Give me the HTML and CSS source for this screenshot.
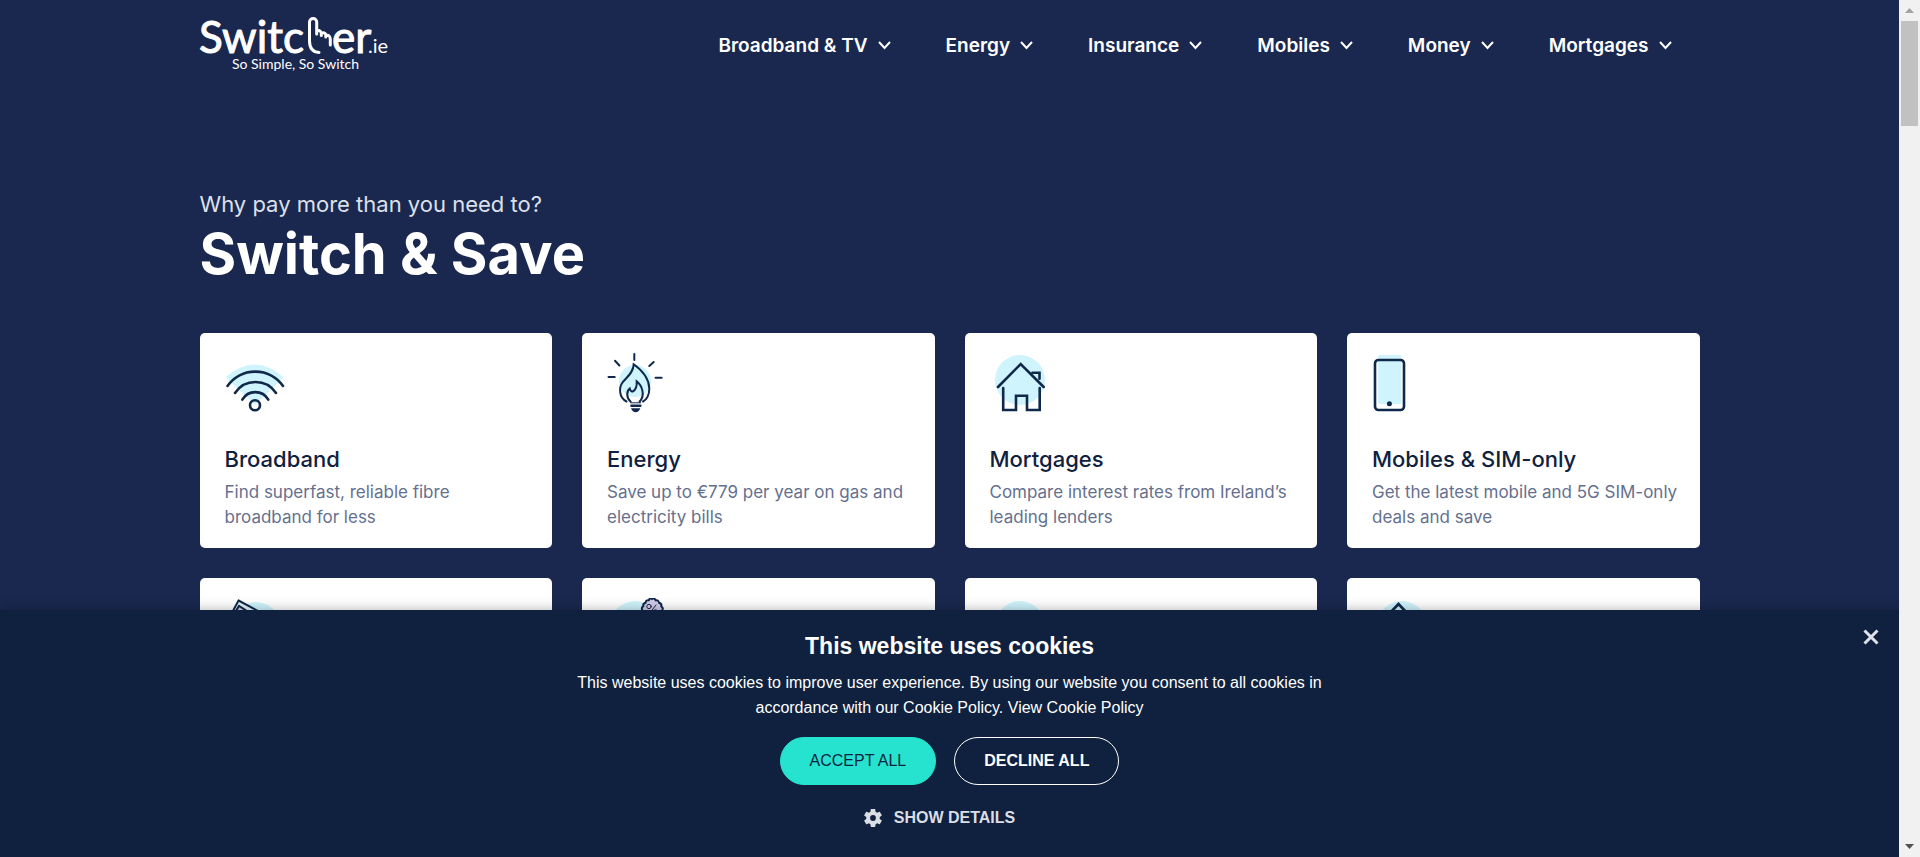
FILE: index.html
```html
<!DOCTYPE html>
<html lang="en">
<head>
<meta charset="utf-8">
<title>Switcher.ie</title>
<link rel="stylesheet" href="styles.css">
</head>
<body>
<div class="window">
  <div class="page">
    <header class="container header">
      <a class="logo" href="#" aria-label="Switcher.ie">
        <svg width="190" height="62" viewBox="0 0 190 62" fill="#fff">
          <g class="logo-word">
            <text x="-1" y="39">Switc</text>
            <text x="132" y="39">er</text>
            <text class="logo-tld" x="168" y="39">.ie</text>
          </g>
          <path d="M119 38.500C112 38 109.500 33 109.500 27V8a3.600 3.600 0 0 1 7.200 0V20V17.500q3.300-2.500 4.600 1.500v2.500v-2q3.500-2 4.500 1.500v2v-1.500q4.500-1 4.500 4V31" fill="none" stroke="#fff" stroke-width="3" stroke-linecap="round" stroke-linejoin="round"/>
          <text class="logo-tag" x="32" y="55">So Simple, So Switch</text>
        </svg>
      </a>
      <nav class="nav">
        <a href="#">Broadband &amp; TV <svg class="chev" width="13" height="9" viewBox="0 0 13 9"><path d="M1 1l5.500 6L12 1"/></svg></a>
        <a href="#">Energy <svg class="chev" width="13" height="9" viewBox="0 0 13 9"><path d="M1 1l5.500 6L12 1"/></svg></a>
        <a href="#">Insurance <svg class="chev" width="13" height="9" viewBox="0 0 13 9"><path d="M1 1l5.500 6L12 1"/></svg></a>
        <a href="#">Mobiles <svg class="chev" width="13" height="9" viewBox="0 0 13 9"><path d="M1 1l5.500 6L12 1"/></svg></a>
        <a href="#">Money <svg class="chev" width="13" height="9" viewBox="0 0 13 9"><path d="M1 1l5.500 6L12 1"/></svg></a>
        <a href="#">Mortgages <svg class="chev" width="13" height="9" viewBox="0 0 13 9"><path d="M1 1l5.500 6L12 1"/></svg></a>
      </nav>
    </header>

    <main class="container">
      <p class="kicker">Why pay more than you need to?</p>
      <h1 class="title">Switch &amp; Save</h1>

      <div class="cards">
        <a class="card" href="#">
          <svg class="icon" viewBox="0 0 60 60">
            <path class="tint" d="M.7 24.300Q30-1.500 58.500 24.300L30 52Z"/>
            <path d="M2.500 33A34 34 0 0 1 58 33M10 40a24.600 24.600 0 0 1 41 0M17.300 46.700a14.900 14.900 0 0 1 26 0"/>
            <circle cx="30" cy="52.300" r="5"/>
          </svg>
          <h2>Broadband</h2>
          <p>Find superfast, reliable fibre broadband for less</p>
        </a>
        <a class="card" href="#">
          <svg class="icon" viewBox="0 0 60 60">
            <circle class="tint" cx="28" cy="28" r="16"/>
            <path class="mid" d="M27.300 1V7M8 7.700l4.400 4.800M46.700 9l-4.400 4M1.500 24h6.200M48.500 24.700h6.200"/>
            <path class="mid" d="M19.500 48.500C11.500 44.500 12 34 15.500 29.500C20 24 26.500 19.500 26.700 11.300C34 16.500 42 24.500 42.300 35.500C42.400 42 39.500 47 36 48.500"/>
            <path class="mid" d="M23.700 48.700C19 44.500 19.500 38 22.700 35.500q1 3.500 3 3C29 37 30 33 29.700 28.300C34.500 32 39 42 32.500 48.700"/>
            <path class="thin" d="M23.700 49.800h10"/>
            <path d="M24.500 52.800h8.800"/>
            <path class="solid" d="M24 55.300h9.300q-1.500 4-4.600 4t-4.700-4Z"/>
          </svg>
          <h2>Energy</h2>
          <p>Save up to €779 per year on gas and electricity bills</p>
        </a>
        <a class="card" href="#">
          <svg class="icon" viewBox="0 0 60 60">
            <circle class="tint" cx="30" cy="27" r="25"/>
            <path d="M8 34L30.700 11L53.700 34M42.500 19.700h7v6M13.200 35V57H26V42.700H37V57H49.700V35"/>
          </svg>
          <h2>Mortgages</h2>
          <p>Compare interest rates from Ireland’s leading lenders</p>
        </a>
        <a class="card" href="#">
          <svg class="icon" viewBox="0 0 60 60">
            <rect class="tint" x="6" y="2" width="23.500" height="49" rx="2"/>
            <rect x="3" y="7" width="29" height="50" rx="3.500"/>
            <circle class="solid" cx="17.400" cy="50.700" r="2.500"/>
          </svg>
          <h2>Mobiles &amp; SIM-only</h2>
          <p>Get the latest mobile and 5G SIM-only deals and save</p>
        </a>
        <a class="card" href="#" aria-label="Ticket offers">
          <svg class="icon" viewBox="0 0 60 60">
            <circle class="tint" cx="31" cy="29" r="25"/>
            <path class="mid paper" d="M13.500 2.500L44 19L30 48L2 24Z"/>
            <path class="mid lilac" d="M9 16l5-8 8 5"/>
          </svg>
        </a>
        <a class="card" href="#" aria-label="Discounts">
          <svg class="icon" viewBox="0 0 60 60">
            <circle class="tint" cx="28" cy="28" r="25"/>
            <path class="mid lilac" d="M45 1q2.500-1.500 3.700 1.300q3-.5 3.300 2.500q3 .8 2.300 3.500q2.500 1.700.9 4q1.400 2.700-1.100 4q.2 3-2.700 3.300q-1 2.800-3.800 2q-2.600 2-4.600-.1q-3 .8-3.900-2q-3-.4-2.700-3.300q-2.400-1.500-1-4q-1.500-2.400.9-4q-.6-2.800 2.300-3.500q.5-3 3.300-2.500q.8-2.700 3.100-1.200Z"/>
            <path class="thin" d="M49 7l-7 9"/>
            <circle class="thin" cx="42" cy="8.500" r="2.200"/>
            <circle class="thin" cx="48.500" cy="14" r="2.200"/>
          </svg>
        </a>
        <a class="card" href="#" aria-label="Money">
          <svg class="icon" viewBox="0 0 60 60">
            <circle class="tint" cx="30" cy="28" r="25"/>
          </svg>
        </a>
        <a class="card" href="#" aria-label="Home">
          <svg class="icon" viewBox="0 0 60 60">
            <circle class="tint" cx="30" cy="28" r="25"/>
            <path d="M10 23.500L26.500 6L43 23.500"/>
          </svg>
        </a>
      </div>
    </main>

    <section class="cookies" aria-label="Cookie consent">
      <button class="close" aria-label="Close"><svg width="18" height="18" viewBox="0 0 18 18"><path d="M2.500 2.500l13 13M15.500 2.500l-13 13"/></svg></button>
      <h2>This website uses cookies</h2>
      <p>This website uses cookies to improve user experience. By using our website you consent to all cookies in accordance with our Cookie Policy. <a href="#">View Cookie Policy</a></p>
      <div class="actions">
        <button class="btn accept">ACCEPT ALL</button>
        <button class="btn decline">DECLINE ALL</button>
      </div>
      <button class="details">
        <svg width="18" height="18" viewBox="2 2 20 20"><path d="M19.430 12.980c.04-.32.07-.64.07-.98s-.03-.66-.07-.98l2.110-1.650c.19-.15.24-.42.12-.64l-2-3.460c-.12-.22-.39-.3-.61-.22l-2.490 1c-.52-.4-1.080-.73-1.690-.98l-.38-2.650C14.460 2.180 14.250 2 14 2h-4c-.25 0-.46.18-.49.42l-.38 2.650c-.61.25-1.170.59-1.690.98l-2.490-1c-.23-.09-.49 0-.61.22l-2 3.460c-.13.22-.07.49.12.64l2.110 1.650c-.04.32-.07.65-.07.98s.03.66.07.98l-2.110 1.650c-.19.15-.24.42-.12.64l2 3.460c.12.22.39.3.61.22l2.490-1c.52.4 1.080.73 1.690.98l.38 2.650c.03.24.24.42.49.42h4c.25 0 .46-.18.49-.42l.38-2.650c.61-.25 1.170-.59 1.690-.98l2.490 1c.23.09.49 0 .61-.22l2-3.460c.12-.22.07-.49-.12-.64l-2.110-1.650zM12 15.200a3.200 3.200 0 1 1 0-6.400 3.200 3.200 0 0 1 0 6.400z"/></svg>
        SHOW DETAILS
      </button>
    </section>
  </div>

  <div class="scrollbar" aria-hidden="true">
    <svg width="9" height="5" viewBox="0 0 9 5"><path d="M0 5L4.500 0L9 5Z" fill="#a3a3a3"/></svg>
    <div class="thumb"></div>
    <svg class="down" width="9" height="5" viewBox="0 0 9 5"><path d="M0 0L4.500 5L9 0Z" fill="#505050"/></svg>
  </div>
</div>
</body>
</html>
```
FILE: styles.css
```css
* {
  box-sizing: border-box;
}

body {
  margin: 0;
  font-family: Inter, "Liberation Sans", sans-serif;
  background: #1a284f;
}

h1, h2, p {
  margin: 0;
}

a {
  color: inherit;
  text-decoration: none;
}

button {
  border: 0;
  background: none;
  font: inherit;
  color: inherit;
  cursor: pointer;
}

.window {
  display: grid;
  grid-template-columns: 1fr 21px;
  height: 100vh;
  overflow: hidden;
}

.page {
  position: relative;
  min-width: 0;
  overflow: hidden;
  background: #1a284f;
  color: #fff;
}

.container {
  max-width: 1500px;
  margin: 0 auto;
}

.header {
  display: flex;
  align-items: center;
  justify-content: space-between;
  height: 90px;
}

.logo svg {
  display: block;
  overflow: visible;
}

.logo-word {
  font-family: Lato, sans-serif;
  font-size: 44px;
  stroke: #fff;
  stroke-width: 1px;
}

.logo-word .logo-tld {
  font-size: 20px;
  stroke-width: 0;
}

.logo-tag {
  font-family: Lato, sans-serif;
  font-size: 14px;
}

.nav {
  display: flex;
  gap: 55px;
  padding-right: 28px;
  font-size: 19px;
  font-weight: 600;
}

.nav a {
  display: flex;
  align-items: center;
  gap: 10px;
}

.chev {
  fill: none;
  stroke: #fff;
  stroke-width: 2;
}

.kicker {
  margin-top: 98px;
  font-size: 22px;
  line-height: 32px;
  color: #dde0ea;
}

.title {
  font-size: 56px;
  line-height: 68px;
  font-weight: 700;
}

.cards {
  display: grid;
  grid-template-columns: repeat(4, 1fr);
  gap: 30px;
  margin-top: 45px;
}

.card {
  min-height: 215px;
  padding: 20px 16px 18px 25px;
  border-radius: 5px;
  background: #fff;
  color: #65708e;
}

.icon {
  display: block;
  width: 60px;
  height: 60px;
  fill: none;
  stroke: #10294a;
  stroke-width: 2.6px;
  stroke-linecap: round;
}

.icon .tint {
  fill: #cff4fd;
  stroke: none;
}

.icon .mid {
  stroke-width: 2px;
}

.icon .thin {
  stroke-width: 1px;
}

.icon .solid {
  fill: #10294a;
  stroke: none;
}

.icon .paper {
  fill: #e6f3fa;
}

.icon .lilac {
  fill: #d3cbea;
}

.card h2 {
  margin-top: 32px;
  font-size: 22px;
  line-height: 28px;
  font-weight: 500;
  color: #10213f;
}

.card p {
  margin-top: 7px;
  font-size: 17px;
  line-height: 25px;
}

.cookies {
  position: absolute;
  left: 0;
  right: 0;
  bottom: 0;
  display: flex;
  flex-direction: column;
  align-items: center;
  padding: 20px 20px 27px;
  background: #0f213e;
  box-shadow: 0 0 12px rgba(0, 0, 0, 0.3);
  font-family: "Liberation Sans", Arial, sans-serif;
  text-align: center;
}

.cookies h2 {
  font-size: 23px;
  line-height: 32px;
}

.cookies p {
  max-width: 760px;
  margin-top: 8px;
  font-size: 16px;
  line-height: 25px;
}

.close {
  position: absolute;
  top: 18px;
  right: 19px;
  padding: 0;
}

.close svg {
  display: block;
  stroke: #dfe2e8;
  stroke-width: 3;
}

.actions {
  display: flex;
  gap: 18px;
  margin-top: 17px;
}

.btn {
  height: 48px;
  padding: 0 29px;
  border: 1px solid #26e3cf;
  border-radius: 24px;
  font-size: 16px;
}

.accept {
  background: #26e3cf;
  color: #0f213e;
}

.decline {
  border-color: #fff;
  font-weight: 700;
}

.details {
  display: flex;
  align-items: center;
  gap: 12px;
  margin-top: 20px;
  margin-right: 20px;
  padding: 0;
  font-size: 16px;
  line-height: 25px;
  font-weight: 700;
  color: #dbdee5;
}

.details svg {
  fill: #dbdee5;
}

.scrollbar {
  display: flex;
  flex-direction: column;
  align-items: center;
  padding: 8px 2px;
  background: #f1f1f1;
}

.thumb {
  width: 100%;
  height: 105px;
  margin-top: 8px;
  background: #c1c1c1;
}

.down {
  margin-top: auto;
}
```
